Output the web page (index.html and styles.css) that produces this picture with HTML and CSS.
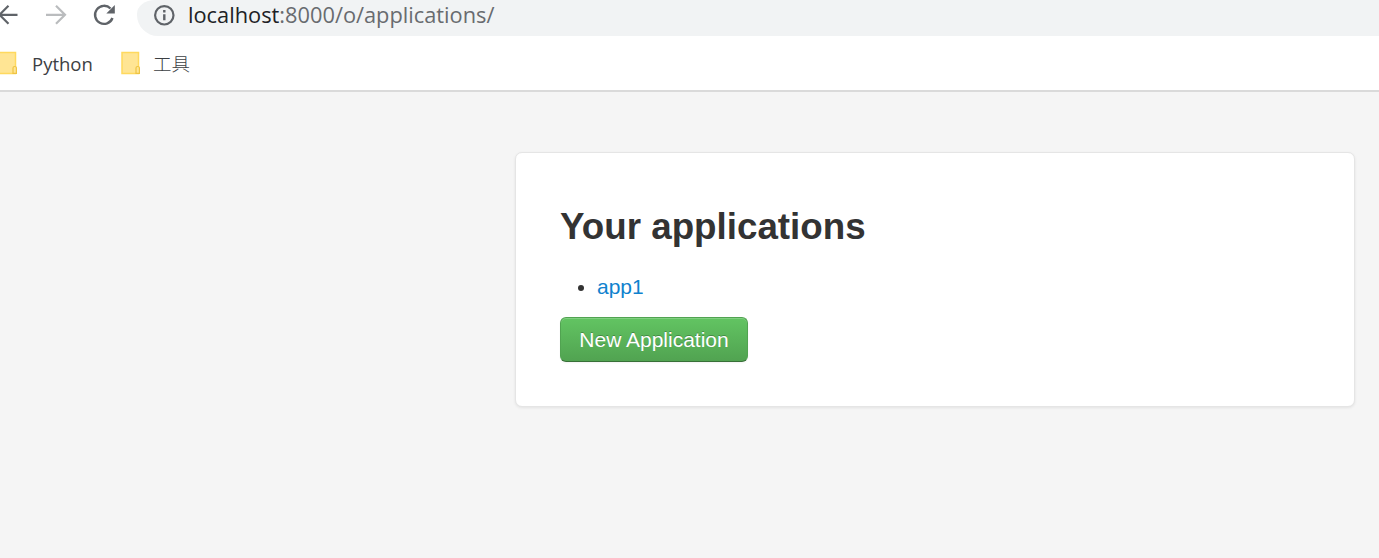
FILE: index.html
```html
<!DOCTYPE html>
<html lang="en">
<head>
<meta charset="utf-8">
<title>Your applications</title>
<link rel="stylesheet" href="styles.css">
</head>
<body>
<header class="browser">
  <div class="toolbar">
    <svg class="nav" width="126" height="36" viewBox="0 0 126 36" fill="none" stroke-width="2.2">
      <path d="M17.500 14.800H0M8.500 5.800L-.5 14.800L8.500 23.800" stroke="#5f6368"/>
      <path d="M46 14.800H64.500M56 5.800L65 14.800L56 23.800" stroke="#babcbe"/>
      <path d="M112.500 18A9 9 0 1 1 110.500 8.500" stroke="#5f6368" stroke-width="2.400"/>
      <path d="M114.800 5V13.500H106.300Z" fill="#5f6368"/>
    </svg>
    <div class="address">
      <svg class="info" width="22" height="22" viewBox="0 0 22 22" fill="none" stroke="#5f6368" stroke-width="2.200">
        <circle cx="11.300" cy="11.300" r="9.200"/>
        <path d="M11.300 10.300V16.300M11.300 6V8.500" stroke-width="2.400"/>
      </svg>
      <span class="url"><span class="host">localhost</span>:8000/o/applications/</span>
    </div>
  </div>
  <nav class="bookmarks">
    <svg class="folder first" width="20" height="24" viewBox="0 0 20 24"><path d="M1 1.500H17.500V22.500H1Z" fill="#ffe594" stroke="#ffd95e" stroke-width="1.500"/><path d="M15 22.300V17Q15 15.500 16.700 15.500T18.400 17V22.300Z" fill="#ffe594" stroke="#efc443" stroke-width="1.200"/></svg>
    <span class="label python">Python</span>
    <svg class="folder second" width="20" height="24" viewBox="0 0 20 24"><path d="M1 1.500H17.500V22.500H1Z" fill="#ffe594" stroke="#ffd95e" stroke-width="1.500"/><path d="M15 22.300V17Q15 15.500 16.700 15.500T18.400 17V22.300Z" fill="#ffe594" stroke="#efc443" stroke-width="1.200"/></svg>
    <span class="label tools">工具</span>
  </nav>
</header>
<main class="card">
  <h1 class="title">Your applications</h1>
  <ul class="apps"><li class="app"><a class="link" href="#">app1</a></li></ul>
  <a class="button" href="#">New Application</a>
</main>
</body>
</html>
```
FILE: styles.css
```css
* { box-sizing: border-box; }
body {
  margin: 0;
  height: 558px;
  overflow: hidden;
  background: #f5f5f5;
  color: #333;
  font-family: "Liberation Sans", Arial, sans-serif;
  font-size: 21px;
}
.browser {
  height: 92px;
  background: #fff;
  border-bottom: 2px solid #dadada;
  font-family: "Open Sans", "Noto Sans CJK SC", sans-serif;
}
.toolbar { display: flex; height: 36px; }
.nav { flex: none; margin-right: 11px; }
.address {
  flex: 1;
  display: flex;
  align-items: flex-start;
  padding: 4px 0 0 16px;
  background: #f1f3f4;
  border-radius: 0 0 0 21px / 0 0 0 21px;
  border-top-left-radius: 18px 14px;
}
.info { flex: none; margin-right: 13px; }
.url { color: #686b6f; font-size: 21.8px; line-height: 22px; white-space: nowrap; }
.host { color: #202124; }
.bookmarks { display: flex; align-items: center; height: 54px; }
.folder { flex: none; }
.first { margin-left: -2px; }
.second { margin-left: 28px; }
.label { padding-top: 1px; color: #3c4043; font-size: 18.5px; line-height: 24px; white-space: nowrap; }
.python { width: 61px; margin-left: 14px; }
.tools { margin-left: 12px; padding-top: 0; font-family: "Noto Sans CJK SC", sans-serif; font-weight: 300; }
.card {
  width: 840px;
  height: 255px;
  margin: 60px 0 0 515px;
  padding: 44px;
  background: #fff;
  border: 1px solid #e5e5e5;
  border-radius: 7px;
  box-shadow: 0 1px 3px rgba(0, 0, 0, .08);
}
.title { margin: 0; font-size: 36.75px; line-height: 60px; white-space: nowrap; }
.apps { margin: 15px 0; padding: 0 0 0 37px; line-height: 30px; }
.link { color: #0f82ce; text-decoration: none; }
.button {
  display: flex;
  align-items: center;
  justify-content: center;
  width: 188px;
  height: 45px;
  border: 1px solid;
  border-color: #51a351 #51a351 #387038;
  border-radius: 6px;
  background: linear-gradient(#62c462, #51a351);
  box-shadow: inset 0 1px 0 rgba(255, 255, 255, .2), 0 1px 2px rgba(0, 0, 0, .05);
  color: #fff;
  text-decoration: none;
  text-shadow: 0 -1px 0 rgba(0, 0, 0, .25);
  white-space: nowrap;
}
```
